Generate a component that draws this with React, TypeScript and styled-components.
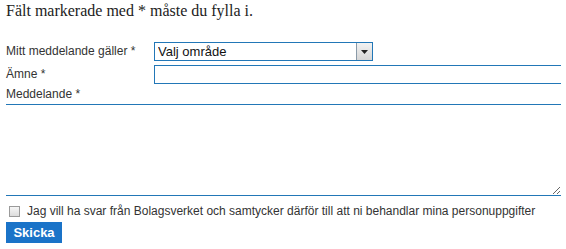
import React from "react";
import styled, { createGlobalStyle } from "styled-components";

const Global = createGlobalStyle`
  html, body { margin: 0; padding: 0; background: #fff; }
`;

const Page = styled.div`
  padding: 1px 5px 0 6px;
  font-family: "Liberation Sans", Arial, sans-serif;
  font-size: 12px;
  color: #333;
`;

const Heading = styled.h1`
  margin: 0 0 21px;
  font-family: "Liberation Serif", "Times New Roman", serif;
  font-size: 16px;
  line-height: 20px;
  font-weight: normal;
  color: #222;
`;

const FormGrid = styled.div`
  display: grid;
  grid-template-columns: 148px 1fr;
  row-gap: 4px;
  align-items: center;
`;

const Label = styled.label`
  line-height: 19px;
  white-space: nowrap;
`;

const WideLabel = styled(Label)`
  grid-column: 1 / -1;
  line-height: 20px;
  margin-top: -4px;
`;

const SelectBox = styled.div`
  display: flex;
  width: 219px;
  height: 19px;
  box-sizing: border-box;
  border: 1px solid #2277b7;
  background: #fff;
`;

const Select = styled.select`
  flex: 1;
  appearance: none;
  border: none;
  outline: none;
  background: transparent;
  padding: 0 3px;
  font-family: "Liberation Sans", Arial, sans-serif;
  font-size: 13px;
  color: #111;
`;

const ArrowButton = styled.span`
  width: 15px;
  display: flex;
  align-items: center;
  justify-content: center;
  border-left: 1px solid #8a9aa8;
  background: linear-gradient(#f2f2f2, #d6d6d6);
  pointer-events: none;
`;

const TextInput = styled.input`
  height: 19px;
  box-sizing: border-box;
  border: 1px solid #2277b7;
  border-right: none;
  outline: none;
  padding: 0 3px;
  font-family: "Liberation Sans", Arial, sans-serif;
  font-size: 12px;
`;

const TextArea = styled.textarea`
  grid-column: 1 / -1;
  display: block;
  height: 92px;
  box-sizing: border-box;
  margin-top: -4px;
  border: none;
  border-top: 1px solid #2277b7;
  border-bottom: 1px solid #2277b7;
  outline: none;
  font-family: "Liberation Sans", Arial, sans-serif;
  font-size: 12px;
`;

const ConsentRow = styled.label`
  display: flex;
  align-items: center;
  gap: 7px;
  margin: 7px 0 3px 3px;
  line-height: 16px;
  font-size: 12px;
  color: #333;
`;

const Checkbox = styled.input`
  appearance: none;
  margin: 0;
  width: 11px;
  height: 11px;
  border: 1px solid #9a9a9a;
  background: linear-gradient(#f6f6f6, #dcdcdc);
`;

const SubmitButton = styled.button`
  display: block;
  width: 56px;
  height: 21px;
  border: none;
  padding: 0;
  background: #1a73c8;
  color: #fff;
  font-family: "Liberation Sans", Arial, sans-serif;
  font-size: 13px;
  font-weight: bold;
`;

export default function App() {
  return (
    <Page>
      <Global />
      <Heading>Fält markerade med * måste du fylla i.</Heading>
      <FormGrid>
        <Label htmlFor="area">Mitt meddelande gäller *</Label>
        <SelectBox>
          <Select id="area" defaultValue="">
            <option value="">Valj område</option>
          </Select>
          <ArrowButton>
            <svg width="7" height="4" viewBox="0 0 7 4">
              <path d="M0 0h7L3.5 4z" fill="#222" />
            </svg>
          </ArrowButton>
        </SelectBox>
        <Label htmlFor="subject">Ämne *</Label>
        <TextInput id="subject" type="text" />
        <WideLabel htmlFor="message">Meddelande *</WideLabel>
        <TextArea id="message" />
      </FormGrid>
      <ConsentRow>
        <Checkbox type="checkbox" />
        Jag vill ha svar från Bolagsverket och samtycker därför till att ni behandlar mina personuppgifter
      </ConsentRow>
      <SubmitButton type="button">Skicka</SubmitButton>
    </Page>
  );
}
